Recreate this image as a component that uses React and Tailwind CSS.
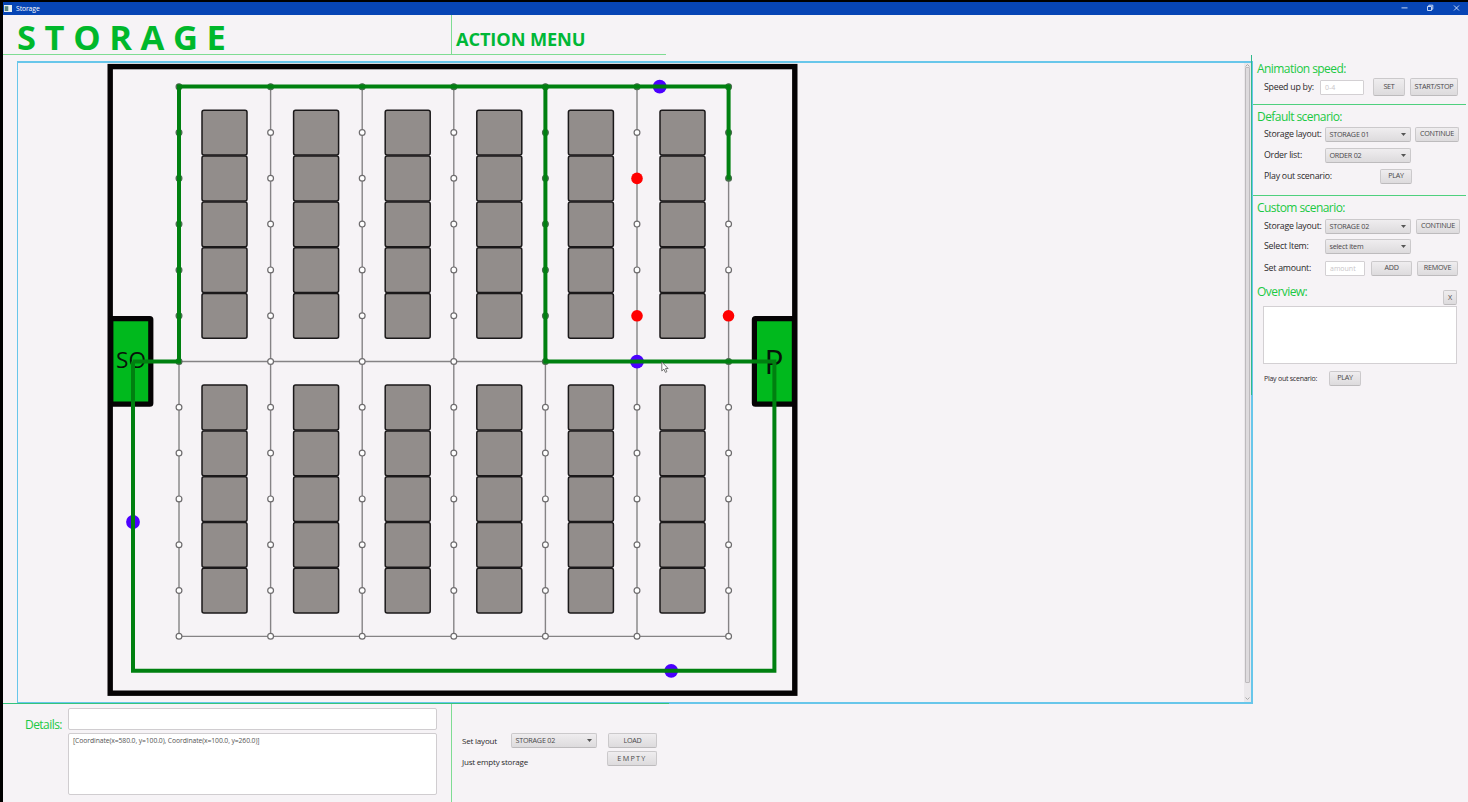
import React from "react";

const GREEN = "#008010";
const columns = [179, 270.6, 362.2, 453.8, 545.4, 637, 728.6];
const nodeRows = Array.from({ length: 13 }, (_, i) => 86.7 + i * 45.8);
const shelfColumns = columns.slice(0, 6).map((x) => x + 23);
const shelfRows = [110.3, 156.1, 201.9, 247.7, 293.5, 385.1, 430.9, 476.7, 522.5, 568.3];
const covered = (c, r) =>
  r === 0 || (c === 0 && r <= 6) || (c === 4 && r <= 6) || (c === 6 && r <= 2) || (r === 6 && c >= 4);

function StorageMap() {
  return (
    <svg className="block shrink-0" width="782" height="639" viewBox="18 63 782 639">
      <rect x="110.2" y="66.6" width="684.6" height="626.6" fill="none" stroke="#050304" strokeWidth="5.4" />
      <g stroke="#858385" strokeWidth="1.4">
        {columns.map((x) => (
          <line key={x} x1={x} x2={x} y1="87" y2="636.4" />
        ))}
        {[86.7, 361.5, 636.4].map((y) => (
          <line key={y} x1="179" x2="728.6" y1={y} y2={y} />
        ))}
      </g>
      {shelfColumns.map((x) =>
        shelfRows.map((y) => (
          <rect key={`${x}-${y}`} x={x} y={y} width="45" height="44.8" rx="2" fill="#928d8b" stroke="#1b191a" strokeWidth="1.5" />
        ))
      )}
      {columns.map((x, c) =>
        nodeRows.map((y, r) => (
          <circle
            key={`${c}-${r}`}
            cx={x}
            cy={y}
            r="2.9"
            fill={covered(c, r) ? "#2d7a3a" : "#ffffff"}
            stroke={covered(c, r) ? "#4c6b50" : "#6e6c6e"}
            strokeWidth="1.2"
          />
        ))
      )}
      <rect x="110.8" y="318.6" width="40" height="85.6" rx="1" fill="#00b91d" stroke="#050304" strokeWidth="5.2" />
      <rect x="754.4" y="318.6" width="40" height="85.6" rx="1" fill="#00b91d" stroke="#050304" strokeWidth="5.2" />
      <text x="116" y="368.3" fontFamily="'Open Sans'" fontSize="22.5" textLength="30" lengthAdjust="spacingAndGlyphs" fill="#071309">SO</text>
      <text x="764.6" y="374" fontFamily="'Open Sans'" fontSize="33" textLength="19" lengthAdjust="spacingAndGlyphs" fill="#071309">P</text>
      <g fill="#4c00ff">
        <circle cx="659.7" cy="86.7" r="6.9" />
        <circle cx="637" cy="361.6" r="6.9" />
        <circle cx="133" cy="522" r="6.9" />
        <circle cx="671.2" cy="670.8" r="6.9" />
      </g>
      <g fill="#ff0000">
        <circle cx="637" cy="178.4" r="5.8" />
        <circle cx="637" cy="315.8" r="5.8" />
        <circle cx="728.5" cy="315.8" r="5.8" />
      </g>
      <g fill="none" stroke={GREEN} strokeWidth="4">
        <path d="M133 361.6H179V86.6H728.6V179.5" />
        <path d="M545.4 86.6V361.6H774.4V670.8H133V361.6" />
      </g>
      <path d="M661.8 361.9V371l2.1-1.9 1.5 3.3 1.5-.7-1.4-3.2h2.6Z" fill="#fff" stroke="#555" strokeWidth=".8" />
    </svg>
  );
}

const Button = ({ className, spacing = "tracking-[-0.25px]", children }) => (
  <button
    className={`flex shrink-0 items-center justify-center rounded-[2px] border border-[#cbc9cb] border-b-[#bdbbbd] bg-linear-to-b from-[#efedef] to-[#dddbdd] text-[7.2px] leading-none text-[#4a484a] ${spacing} ${className}`}
  >
    {children}
  </button>
);

const Select = ({ children }) => (
  <div className="flex h-[15px] w-[86px] shrink-0 items-center justify-between rounded-[2px] border border-[#cbc9cb] border-b-[#bdbbbd] bg-linear-to-b from-[#efedef] to-[#dddbdd] pr-[4px] pl-[3.5px] text-[7.2px] leading-none tracking-[-0.22px] text-[#4a484a]">
    <span className="pt-px">{children}</span>
    <svg width="5" height="3" viewBox="0 0 5 3">
      <path d="M0 0h5L2.5 3Z" fill="#555" />
    </svg>
  </div>
);

const Field = ({ className, children }) => (
  <div className={`flex h-[15px] shrink-0 items-center rounded-[1px] border border-[#d3d0d3] bg-white pl-[4px] text-[7px] leading-none text-[#c9c5c9] ${className}`}>
    {children}
  </div>
);

const Heading = ({ className, children }) => (
  <h2 className={`ml-[4px] h-4 text-[12px] leading-4 tracking-[-0.56px] whitespace-nowrap text-[#1bc944] ${className}`}>{children}</h2>
);

const Row = ({ className, label, labelWidth, labelText = "text-[8.8px] tracking-[-0.25px]", children }) => (
  <div className={`flex h-4 items-center pl-[11px] ${className}`}>
    <span className={`shrink-0 leading-none whitespace-nowrap text-[#2b292b] ${labelWidth} ${labelText}`}>{label}</span>
    {children}
  </div>
);

export default function App() {
  return (
    <div className="flex h-[802px] w-[1468px] flex-col overflow-hidden border-t-2 border-l-[3px] border-black bg-[#f6f3f6] font-['Open_Sans','Noto_Sans',sans-serif]">
      <div className="flex h-[13px] shrink-0 items-center bg-[#0745b5] pl-[1px] text-white">
        <svg width="8" height="7" viewBox="0 0 8 7">
          <path d="M0 0h8v7H0Z" fill="#e8f0f0" />
          <path d="M.7 1.2h3.6v4.8H.7Z" fill="#55837f" />
        </svg>
        <span className="ml-[4px] pt-[2px] text-[6.8px] leading-none tracking-[-0.1px]">Storage</span>
        <svg className="ml-auto" width="68" height="13" viewBox="0 0 68 13" fill="none" stroke="#d9e5fb" strokeWidth=".9">
          <path d="M1.5 5.9h6M27.5 4.5h4v4h-4ZM28.8 4.5V3.2h4v4h-1.3M54 3.5l5 5M59 3.5l-5 5" />
        </svg>
      </div>

      <header className="flex h-[40px] w-[663px] shrink-0 border-b border-[#7fdc93]">
        <h1 className="w-[449px] shrink-0 border-r border-[#7fdc93] pl-[14px] text-[34.5px] leading-[43px] font-bold tracking-[8.6px] text-[#00b82b]">STORAGE</h1>
        <div className="pt-[3px] pl-[4px] text-[18.2px] leading-[43px] font-bold tracking-[-0.1px] whitespace-nowrap text-[#00b837]">ACTION MENU</div>
      </header>

      <div className="relative flex h-[649px] shrink-0">
        <main className="mt-[6px] ml-[14px] flex h-[643px] w-[1236px] shrink-0 justify-between border-t-2 border-r-2 border-b-2 border-l border-[#68c6ea]">
          <StorageMap />
          <div className="flex h-[639px] w-[7px] shrink-0 flex-col items-center justify-between bg-[#ebe8eb]">
            <svg className="mt-px" width="5" height="3" viewBox="0 0 5 3"><path d="M.5 2.5l2-2 2 2" fill="none" stroke="#aaa" /></svg>
            <div className="mb-[14px] w-[5px] grow rounded-[1px] border border-[#bdbabd] bg-[#dedbde]" />
            <svg className="mb-[2px]" width="5" height="3" viewBox="0 0 5 3"><path d="M.5.5l2 2 2-2" fill="none" stroke="#aaa" /></svg>
          </div>
        </main>
        <div className="absolute top-0 left-[1248px] h-[340px] w-px bg-[#2fb98c]" />
        <div className="absolute bottom-0 left-0 h-px w-[666px] bg-[#35c47c]" />

        <aside className="flex h-[340px] w-[215px] shrink-0 flex-col">
          <section className="h-[50px] w-[213px] shrink-0 border-b border-[#4fd07e]">
            <Heading className="mt-[6px]">Animation speed:</Heading>
            <Row className="mt-[2px]" label="Speed up by:" labelWidth="w-[56px]">
              <Field className="w-[44px]">0-4</Field>
              <Button className="ml-[9px] h-[18px] w-[32px]">SET</Button>
              <Button className="ml-[5px] h-[18px] w-[48px]">START/STOP</Button>
            </Row>
          </section>
          <section className="h-[91px] w-[213px] shrink-0 border-b border-[#4fd07e]">
            <Heading className="mt-[4px]">Default scenario:</Heading>
            <Row className="mt-[1px]" label="Storage layout:" labelWidth="w-[61px]">
              <Select>STORAGE 01</Select>
              <Button className="ml-[4px] h-[15px] w-[44px]">CONTINUE</Button>
            </Row>
            <Row className="mt-[5px]" label="Order list:" labelWidth="w-[61px]">
              <Select>ORDER 02</Select>
            </Row>
            <Row className="mt-[5px]" label="Play out scenario:" labelWidth="w-[116px]">
              <Button className="h-[15px] w-[32px]">PLAY</Button>
            </Row>
          </section>
          <section className="flex flex-col">
            <Heading className="mt-[4px]">Custom scenario:</Heading>
            <Row className="mt-[2px]" label="Storage layout:" labelWidth="w-[61px]">
              <Select>STORAGE 02</Select>
              <Button className="ml-[5px] h-[15px] w-[44px]">CONTINUE</Button>
            </Row>
            <Row className="mt-[4px]" label="Select Item:" labelWidth="w-[61px]">
              <Select>select item</Select>
            </Row>
            <Row className="mt-[6px]" label="Set amount:" labelWidth="w-[61px]">
              <Field className="w-[40px]">amount</Field>
              <Button className="ml-[6px] h-[15px] w-[41px]">ADD</Button>
              <Button className="ml-[5px] h-[15px] w-[41px]">REMOVE</Button>
            </Row>
            <div className="mt-[8px] flex h-[22px] items-start">
              <Heading className="w-[186px]">Overview:</Heading>
              <Button className="mt-[6px] h-[15px] w-[14px]">X</Button>
            </div>
            <div className="ml-[10px] h-[58px] w-[194px] border border-[#d3d0d3] bg-white" />
            <Row className="mt-[6px]" label="Play out scenario:" labelWidth="w-[65px]" labelText="text-[7px] tracking-[-0.25px]">
              <Button className="h-[15px] w-[32px]">PLAY</Button>
            </Row>
          </section>
        </aside>
      </div>

      <footer className="flex h-[98px] shrink-0">
        <section className="flex w-[449px] shrink-0 border-r border-[#7fdc93] pt-[4px] pl-[21px]">
          <span className="mt-[9px] w-[44px] shrink-0 pl-px text-[12px] leading-4 tracking-[-0.55px] text-[#1bc944]">Details:</span>
          <div className="flex flex-col gap-[3px]">
            <div className="h-[22px] w-[369px] rounded-[2px] border border-[#d0cdd0] bg-white" />
            <div className="h-[62px] w-[369px] rounded-[2px] border border-[#d0cdd0] bg-white pt-[2px] pl-[4px] text-[6.8px] leading-[9px] tracking-[-0.1px] text-[#555]">
              [Coordinate(x=580.0, y=100.0), Coordinate(x=100.0, y=260.0)]
            </div>
          </div>
        </section>
        <section className="flex flex-col pt-[29px] pl-[10px] text-[8px] leading-none tracking-[-0.2px] text-[#2b292b]">
          <div className="flex h-[15px] items-center">
            <span className="w-[49px] pt-px">Set layout</span>
            <Select>STORAGE 02</Select>
            <Button className="ml-[11px] h-[15px] w-[49px]">LOAD</Button>
          </div>
          <div className="mt-[3px] flex h-[15px] items-center">
            <span className="w-[145px] pt-[6px]">Just empty storage</span>
            <Button className="h-[15px] w-[50px]" spacing="tracking-[1.3px]">EMPTY</Button>
          </div>
        </section>
      </footer>
    </div>
  );
}
